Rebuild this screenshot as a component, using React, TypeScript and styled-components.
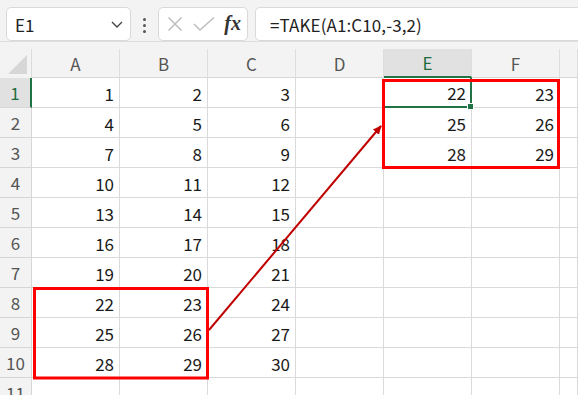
import React from 'react';
import styled, { createGlobalStyle } from 'styled-components';

const GlobalStyle = createGlobalStyle`
  html, body {
    margin: 0;
    padding: 0;
    background: #f3f3f3;
    overflow: hidden;
  }
  body {
    font-family: "Noto Sans CJK JP", "Noto Sans", sans-serif;
  }
`;

// G is off to the right: its header letter is not visible in the shot
const COLS = ['A', 'B', 'C', 'D', 'E', 'F', ''];
const COL_TEMPLATE = '32px repeat(6, 88px) 1fr';

const Page = styled.div`
  width: 578px;
  height: 395px;
  display: flex;
  flex-direction: column;
  background: #f3f3f3;
`;

const Toolbar = styled.div`
  height: 42px;
  box-sizing: border-box;
  padding: 7px 0 0 6px;
  display: flex;
  align-items: flex-start;
  border-bottom: 1px solid #dedede;
`;

const Box = styled.div<{ $w?: number }>`
  height: 34px;
  box-sizing: border-box;
  background: #fff;
  border: 1px solid #d9d9d9;
  border-radius: 5px;
  display: flex;
  align-items: center;
  ${({ $w }) => ($w ? `width: ${$w}px;` : 'flex: 1;')}
`;

const NameBox = styled(Box)`
  padding: 0 6px 0 8px;
  justify-content: space-between;
  font-size: 17px;
  color: #222;
`;

const Dots = styled.div`
  width: 27px;
  display: flex;
  flex-direction: column;
  align-items: center;
  gap: 3px;
  padding-top: 11px;
  span {
    width: 3px;
    height: 3px;
    border-radius: 50%;
    background: #555;
  }
`;

const FxBox = styled(Box)`
  padding: 0 6px 0 8px;
  justify-content: space-between;
  margin-right: 7px;
`;

const Fx = styled.span`
  font-family: "Liberation Serif", "DejaVu Serif", serif;
  font-style: italic;
  font-weight: bold;
  font-size: 20px;
  color: #333;
  line-height: 1;
  padding-bottom: 3px;
`;

const FormulaBox = styled(Box)`
  border-right: none;
  border-radius: 5px 0 0 5px;
  padding-left: 14px;
  font-size: 17px;
  color: #222;
  letter-spacing: 0.1px;
`;

const Sheet = styled.div`
  position: relative;
  flex: 1;
  margin-top: 7px;
`;

const HeaderRow = styled.div`
  display: grid;
  grid-template-columns: ${COL_TEMPLATE};
  height: 29px;
`;

const Corner = styled.div`
  position: relative;
  background: #f3f3f3;
  border-right: 1px solid #dcdcdc;
  &::after {
    content: '';
    position: absolute;
    right: 4px;
    bottom: 4px;
    width: 0;
    height: 0;
    border-left: 19px solid transparent;
    border-bottom: 19px solid #d7d7d7;
  }
`;

const ColHead = styled.div<{ $active?: boolean }>`
  display: flex;
  align-items: center;
  justify-content: center;
  font-size: 17px;
  color: ${({ $active }) => ($active ? '#1e6b3f' : '#555')};
  background: ${({ $active }) => ($active ? '#e1e1e1' : '#f3f3f3')};
  border-right: 1px solid #dedede;
  box-sizing: border-box;
  border-bottom: ${({ $active }) => ($active ? '2px solid #217346' : '1px solid #d6d6d6')};
`;

const Row = styled.div`
  display: grid;
  grid-template-columns: ${COL_TEMPLATE};
  height: 30px;
`;

const RowHead = styled.div<{ $active?: boolean }>`
  display: flex;
  align-items: center;
  justify-content: center;
  font-size: 17px;
  box-sizing: border-box;
  color: ${({ $active }) => ($active ? '#1e6b3f' : '#555')};
  background: ${({ $active }) => ($active ? '#e1e1e1' : '#f3f3f3')};
  border-bottom: 1px solid #d6d6d6;
  border-right: ${({ $active }) => ($active ? '2px solid #217346' : '1px solid #d6d6d6')};
`;

const Cell = styled.div<{ $selected?: boolean }>`
  position: relative;
  background: #fff;
  box-sizing: border-box;
  border-right: 1px solid #dadada;
  border-bottom: 1px solid #dadada;
  display: flex;
  align-items: center;
  justify-content: flex-end;
  padding-right: 5px;
  padding-top: 1px;
  font-size: 17px;
  color: #1a1a1a;
  ${({ $selected }) =>
    $selected &&
    `
    border-right: 2px solid #217346;
    border-bottom: 2px solid #217346;
    padding-right: 4px;
    &::after {
      content: '';
      position: absolute;
      right: -4px;
      bottom: -4px;
      width: 5px;
      height: 5px;
      background: #217346;
      border: 1px solid #fff;
      z-index: 2;
    }
  `}
`;

const Overlay = styled.svg`
  position: absolute;
  left: 0;
  top: 0;
  width: 578px;
  height: 345px;
  pointer-events: none;
  z-index: 3;
`;

const rows: (number | string)[][] = [];
for (let r = 0; r < 10; r++) {
  rows.push([r * 3 + 1, r * 3 + 2, r * 3 + 3, '', '', '', '']);
}
rows[0][4] = 22; rows[0][5] = 23;
rows[1][4] = 25; rows[1][5] = 26;
rows[2][4] = 28; rows[2][5] = 29;
rows.push(['', '', '', '', '', '', '']);

// sheet origin is y=50 in page coords
const oy = 50;

export default function App() {
  return (
    <Page>
      <GlobalStyle />
      <Toolbar>
        <NameBox $w={125}>
          <span>E1</span>
          <svg width="14" height="10" viewBox="0 0 14 10">
            <path d="M2 3 L7 8 L12 3" fill="none" stroke="#444" strokeWidth="1.4" />
          </svg>
        </NameBox>
        <Dots>
          <span />
          <span />
          <span />
        </Dots>
        <FxBox $w={90}>
          <svg width="16" height="16" viewBox="0 0 16 16">
            <path d="M1.5 1.5 L14.5 14.5 M14.5 1.5 L1.5 14.5" stroke="#bdbdbd" strokeWidth="1.5" />
          </svg>
          <svg width="22" height="16" viewBox="0 0 22 16">
            <path d="M1 8 L7 14 L21 1.5" fill="none" stroke="#bdbdbd" strokeWidth="1.5" />
          </svg>
          <Fx>fx</Fx>
        </FxBox>
        <FormulaBox>=TAKE(A1:C10,-3,2)</FormulaBox>
      </Toolbar>
      <Sheet>
        <HeaderRow>
          <Corner />
          {COLS.map((c, i) => (
            <ColHead key={i} $active={c === 'E'}>
              {c}
            </ColHead>
          ))}
        </HeaderRow>
        {rows.map((vals, i) => (
          <Row key={i}>
            <RowHead $active={i === 0}>{i + 1}</RowHead>
            {vals.map((v, j) => (
              <Cell key={j} $selected={i === 0 && j === 4}>
                {v}
              </Cell>
            ))}
          </Row>
        ))}
        <Overlay viewBox={`0 ${oy} 578 345`}>
          <defs>
            <marker id="ah" markerWidth="10" markerHeight="10" refX="8" refY="4" orient="auto" markerUnits="userSpaceOnUse">
              <path d="M0 0 L9 4 L0 8 Z" fill="#c00000" />
            </marker>
          </defs>
          <rect x="383.5" y="81.5" width="175" height="87" fill="none" stroke="#ff0000" strokeWidth="3" />
          <rect x="34.5" y="289.5" width="173" height="89.5" fill="none" stroke="#ff0000" strokeWidth="3" />
          <line x1="209" y1="331" x2="381" y2="127" stroke="#c00000" strokeWidth="2" markerEnd="url(#ah)" />
        </Overlay>
      </Sheet>
    </Page>
  );
}
